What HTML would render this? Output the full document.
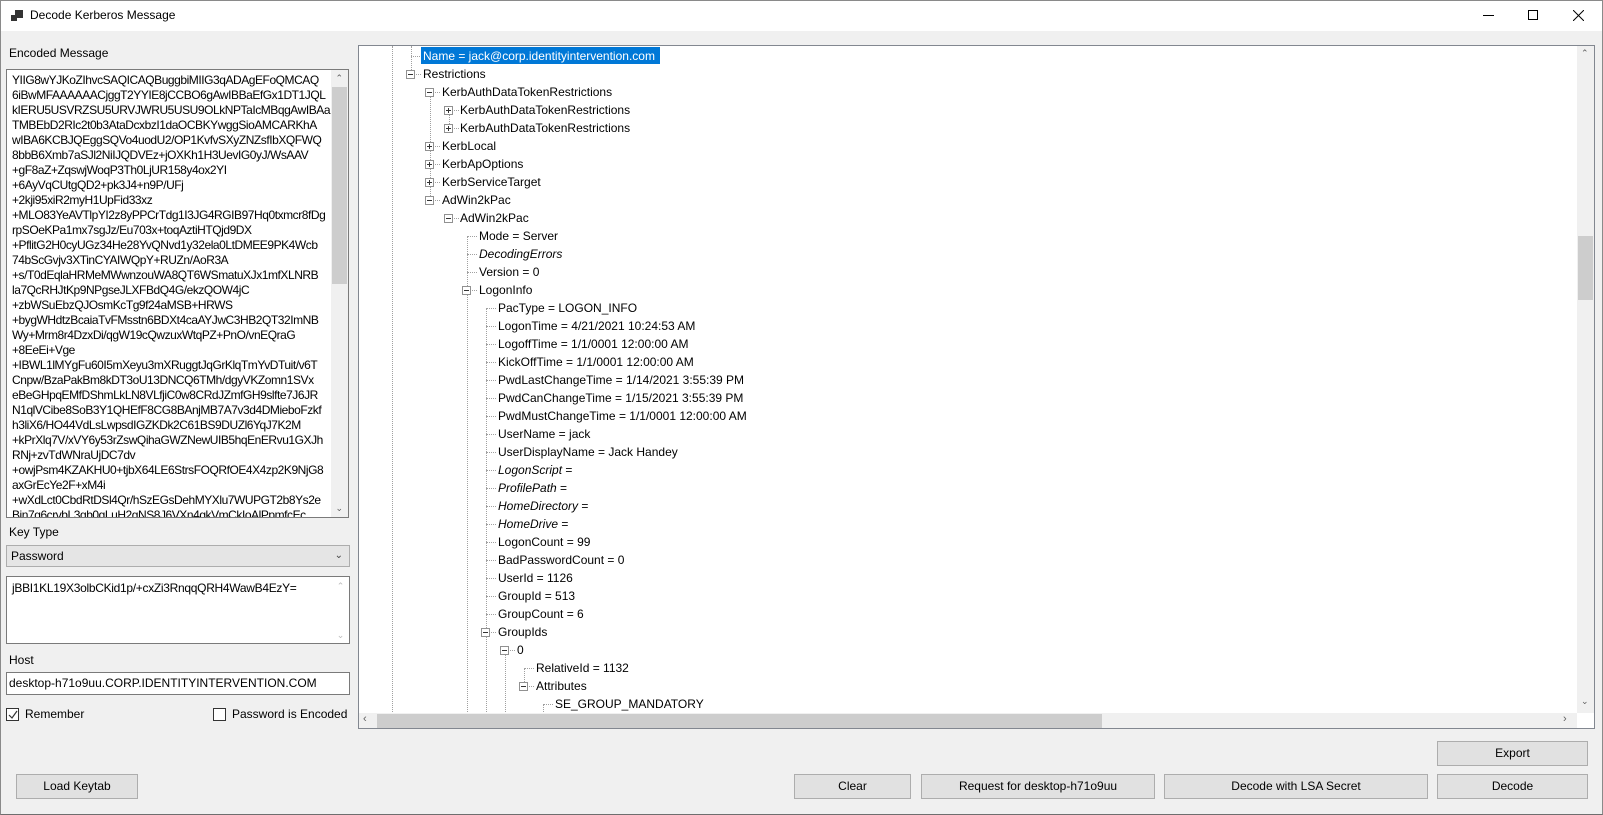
<!DOCTYPE html>
<html><head><meta charset="utf-8"><style>
*{box-sizing:border-box;margin:0;padding:0}
body{width:1603px;height:815px;overflow:hidden;background:#f0f0f0;font-family:"Liberation Sans",sans-serif;font-size:12px;color:#000;position:relative}
.abs{position:absolute}
.win{position:absolute;left:0;top:0;width:1603px;height:815px;border:1px solid #8a8a8a;border-bottom-color:#6e6e6e}
.title{position:absolute;left:1px;top:1px;width:1601px;height:30px;background:#fff}
.btn{position:absolute;background:#e1e1e1;border:1px solid #adadad;text-align:center;line-height:23px;font-size:12px}
.lines div{white-space:nowrap;height:15px;line-height:15px;letter-spacing:-0.45px}
.row{position:absolute;white-space:nowrap;height:16px;line-height:16px}
.vl{position:absolute;width:0;border-left:1px dotted #a0a0a0}
.hl{position:absolute;height:0;border-top:1px dotted #a0a0a0}
.ex{position:absolute;width:9px;height:9px;border:1px solid #919191;background:#fff}
.ex:before{content:"";position:absolute;left:1px;top:3px;width:5px;height:1px;background:#333}
.ex.p:after{content:"";position:absolute;left:3px;top:1px;width:1px;height:5px;background:#333}
i{font-style:italic}
</style></head><body>
<div class="win"></div>
<div class="title"></div>
<svg class="abs" style="left:11px;top:10px" width="12" height="12"><rect x="4" y="0" width="8" height="8" fill="#333"/><rect x="0" y="5" width="6" height="6" fill="#333"/></svg>
<div class="abs" style="left:30px;top:8px;font-size:12px">Decode Kerberos Message</div>
<div class="abs" style="left:1483px;top:15px;width:11px;height:1px;background:#000"></div>
<div class="abs" style="left:1528px;top:10px;width:10px;height:10px;border:1px solid #000"></div>
<svg class="abs" style="left:1573px;top:10px" width="11" height="11"><path d="M0 0L11 11M11 0L0 11" stroke="#000" stroke-width="1"/></svg>

<div class="abs" style="left:9px;top:46px">Encoded Message</div>
<div class="abs" style="left:6px;top:69px;width:343px;height:449px;background:#fff;border:1px solid #7a7a7a;overflow:hidden">
<div class="lines" style="position:absolute;left:5px;top:3px;width:320px;overflow:hidden">
<div>YIIG8wYJKoZIhvcSAQICAQBuggbiMIIG3qADAgEFoQMCAQ</div>
<div>6iBwMFAAAAAACjggT2YYIE8jCCBO6gAwIBBaEfGx1DT1JQL</div>
<div>kIERU5USVRZSU5URVJWRU5USU9OLkNPTaIcMBqgAwIBAaE</div>
<div>TMBEbD2RIc2t0b3AtaDcxbzI1daOCBKYwggSioAMCARKhA</div>
<div>wIBA6KCBJQEggSQVo4uodU2/OP1KvfvSXyZNZsfIbXQFWQ</div>
<div>8bbB6Xmb7aSJl2NiIJQDVEz+jOXKh1H3UevIG0yJ/WsAAV</div>
<div>+gF8aZ+ZqswjWoqP3Th0LjUR158y4ox2YI</div>
<div>+6AyVqCUtgQD2+pk3J4+n9P/UFj</div>
<div>+2kji95xiR2myH1UpFid33xz</div>
<div>+MLO83YeAVTlpYI2z8yPPCrTdg1I3JG4RGIB97Hq0txmcr8fDg</div>
<div>rpSOeKPa1mx7sgJz/Eu703x+toqAztiHTQjd9DX</div>
<div>+PflitG2H0cyUGz34He28YvQNvd1y32ela0LtDMEE9PK4Wcb</div>
<div>74bScGvjv3XTinCYAIWQpY+RUZn/AoR3A</div>
<div>+s/T0dEqlaHRMeMWwnzouWA8QT6WSmatuXJx1mfXLNRB</div>
<div>la7QcRHJtKp9NPgseJLXFBdQ4G/ekzQOW4jC</div>
<div>+zbWSuEbzQJOsmKcTg9f24aMSB+HRWS</div>
<div>+bygWHdtzBcaiaTvFMsstn6BDXt4caAYJwC3HB2QT32ImNB</div>
<div>Wy+Mrm8r4DzxDi/qgW19cQwzuxWtqPZ+PnO/vnEQraG</div>
<div>+8EeEi+Vge</div>
<div>+IBWL1lMYgFu60I5mXeyu3mXRuggtJqGrKlqTmYvDTuit/v6T</div>
<div>Cnpw/BzaPakBm8kDT3oU13DNCQ6TMh/dgyVKZomn1SVx</div>
<div>eBeGHpqEMfDShmLkLN8VLfjiC0w8CRdJZmfGH9slfte7J6JR</div>
<div>N1qlVCibe8SoB3Y1QHEfF8CG8BAnjMB7A7v3d4DMieboFzkf</div>
<div>h3liX6/HO44VdLsLwpsdIGZKDk2C61BS9DUZl6YqJ7K2M</div>
<div>+kPrXlq7V/xVY6y53rZswQihaGWZNewUIB5hqEnERvu1GXJh</div>
<div>RNj+zvTdWNraUjDC7dv</div>
<div>+owjPsm4KZAKHU0+tjbX64LE6StrsFOQRfOE4X4zp2K9NjG8</div>
<div>axGrEcYe2F+xM4i</div>
<div>+wXdLct0CbdRtDSl4Qr/hSzEGsDehMYXlu7WUPGT2b8Ys2e</div>
<div>Bin7g6crvbL3gb0gLuH2gNS8J6VXn4gkVmCkIoAlPpmfcEc</div>
</div>
<div class="abs" style="right:0;top:0;width:17px;height:447px;background:#f0f0f0"></div>
<div class="abs" style="right:1px;top:17px;width:15px;height:197px;background:#cdcdcd"></div>
<div class="abs" style="right:5px;top:3px;font-size:9px;color:#606060">&#8963;</div>
<div class="abs" style="right:5px;bottom:3px;font-size:9px;color:#606060">&#8964;</div>
</div>

<div class="abs" style="left:9px;top:525px">Key Type</div>
<div class="abs" style="left:6px;top:545px;width:344px;height:22px;background:#e5e5e5;border:1px solid #adadad;padding-left:4px;line-height:20px">Password<span style="position:absolute;right:6px;top:0;font-size:10px;color:#444">&#8964;</span></div>
<div class="abs" style="left:6px;top:576px;width:344px;height:68px;background:#fff;border:1px solid #7a7a7a;padding:4px 0 0 5px;letter-spacing:-0.3px">jBBI1KL19X3olbCKid1p/+cxZi3RnqqQRH4WawB4EzY=<span style="position:absolute;right:5px;top:4px;font-size:9px;color:#bbb">&#8963;</span><span style="position:absolute;right:5px;bottom:2px;font-size:9px;color:#bbb">&#8964;</span></div>
<div class="abs" style="left:9px;top:653px">Host</div>
<div class="abs" style="left:6px;top:672px;width:344px;height:23px;background:#fff;border:1px solid #7a7a7a;padding-left:2px;line-height:21px">desktop-h71o9uu.CORP.IDENTITYINTERVENTION.COM</div>
<div class="abs" style="left:6px;top:708px;width:13px;height:13px;border:1px solid #333;background:#fff"></div>
<svg class="abs" style="left:8px;top:710px" width="10" height="10"><path d="M1 5L4 8L9 1" stroke="#333" fill="none" stroke-width="1.2"/></svg>
<div class="abs" style="left:25px;top:707px">Remember</div>
<div class="abs" style="left:213px;top:708px;width:13px;height:13px;border:1px solid #333;background:#fff"></div>
<div class="abs" style="left:232px;top:707px">Password is Encoded</div>

<div class="abs" style="left:358px;top:45px;width:1237px;height:684px;background:#fff;border:1px solid #828790;overflow:hidden">
<div class="abs" style="left:1218px;top:0;width:17px;height:667px;background:#f0f0f0"></div>
<div class="abs" style="left:1219px;top:190px;width:15px;height:64px;background:#cdcdcd"></div>
<div class="abs" style="left:1222px;top:2px;font-size:9px;color:#606060">&#8963;</div>
<div class="abs" style="left:1222px;top:650px;font-size:9px;color:#606060">&#8964;</div>
<div class="abs" style="left:0;top:667px;width:1218px;height:16px;background:#f0f0f0"></div>
<div class="abs" style="left:18px;top:668px;width:725px;height:14px;background:#cdcdcd"></div>
<div class="abs" style="left:4px;top:667px;font-size:11px;color:#606060">&#8249;</div>
<div class="abs" style="left:1204px;top:667px;font-size:11px;color:#606060">&#8250;</div>
</div>
<div class="abs" style="left:359px;top:46px;width:1218px;height:666px;overflow:hidden">
<div style="position:absolute;left:-359px;top:-46px;width:1600px;height:800px">
<div class="vl" style="left:392px;top:46px;height:666px"></div>
<div class="vl" style="left:411px;top:46px;height:26px"></div>
<div class="vl" style="left:430px;top:92px;height:108px"></div>
<div class="vl" style="left:449px;top:110px;height:18px"></div>
<div class="vl" style="left:467px;top:236px;height:476px"></div>
<div class="vl" style="left:486px;top:308px;height:404px"></div>
<div class="vl" style="left:505px;top:650px;height:62px"></div>
<div class="vl" style="left:524px;top:668px;height:22px"></div>
<div class="vl" style="left:543px;top:704px;height:8px"></div>
<div class="abs" style="left:421px;top:47px;width:239px;height:17px;background:#0078d7"></div>
<div class="row" style="left:423px;top:48px;color:#fff">Name = jack@corp.identityintervention.com</div>
<div class="hl" style="left:411px;top:56px;width:9px"></div>
<div class="ex" style="left:406px;top:70px"></div><div class="hl" style="left:416px;top:74px;width:5px"></div><div class="row" style="left:423px;top:66px">Restrictions</div>
<div class="ex" style="left:425px;top:88px"></div><div class="hl" style="left:435px;top:92px;width:5px"></div><div class="row" style="left:442px;top:84px">KerbAuthDataTokenRestrictions</div>
<div class="ex p" style="left:444px;top:106px"></div><div class="hl" style="left:454px;top:110px;width:5px"></div><div class="row" style="left:460px;top:102px">KerbAuthDataTokenRestrictions</div>
<div class="ex p" style="left:444px;top:124px"></div><div class="hl" style="left:454px;top:128px;width:5px"></div><div class="row" style="left:460px;top:120px">KerbAuthDataTokenRestrictions</div>
<div class="ex p" style="left:425px;top:142px"></div><div class="hl" style="left:435px;top:146px;width:5px"></div><div class="row" style="left:442px;top:138px">KerbLocal</div>
<div class="ex p" style="left:425px;top:160px"></div><div class="hl" style="left:435px;top:164px;width:5px"></div><div class="row" style="left:442px;top:156px">KerbApOptions</div>
<div class="ex p" style="left:425px;top:178px"></div><div class="hl" style="left:435px;top:182px;width:5px"></div><div class="row" style="left:442px;top:174px">KerbServiceTarget</div>
<div class="ex" style="left:425px;top:196px"></div><div class="hl" style="left:435px;top:200px;width:5px"></div><div class="row" style="left:442px;top:192px">AdWin2kPac</div>
<div class="ex" style="left:444px;top:214px"></div><div class="hl" style="left:454px;top:218px;width:5px"></div><div class="row" style="left:460px;top:210px">AdWin2kPac</div>
<div class="hl" style="left:467px;top:236px;width:10px"></div><div class="row" style="left:479px;top:228px">Mode = Server</div>
<div class="hl" style="left:467px;top:254px;width:10px"></div><div class="row" style="left:479px;top:246px"><i>DecodingErrors</i></div>
<div class="hl" style="left:467px;top:272px;width:10px"></div><div class="row" style="left:479px;top:264px">Version = 0</div>
<div class="ex" style="left:462px;top:286px"></div><div class="hl" style="left:472px;top:290px;width:5px"></div><div class="row" style="left:479px;top:282px">LogonInfo</div>
<div class="hl" style="left:486px;top:308px;width:10px"></div><div class="row" style="left:498px;top:300px">PacType = LOGON_INFO</div>
<div class="hl" style="left:486px;top:326px;width:10px"></div><div class="row" style="left:498px;top:318px">LogonTime = 4/21/2021 10:24:53 AM</div>
<div class="hl" style="left:486px;top:344px;width:10px"></div><div class="row" style="left:498px;top:336px">LogoffTime = 1/1/0001 12:00:00 AM</div>
<div class="hl" style="left:486px;top:362px;width:10px"></div><div class="row" style="left:498px;top:354px">KickOffTime = 1/1/0001 12:00:00 AM</div>
<div class="hl" style="left:486px;top:380px;width:10px"></div><div class="row" style="left:498px;top:372px">PwdLastChangeTime = 1/14/2021 3:55:39 PM</div>
<div class="hl" style="left:486px;top:398px;width:10px"></div><div class="row" style="left:498px;top:390px">PwdCanChangeTime = 1/15/2021 3:55:39 PM</div>
<div class="hl" style="left:486px;top:416px;width:10px"></div><div class="row" style="left:498px;top:408px">PwdMustChangeTime = 1/1/0001 12:00:00 AM</div>
<div class="hl" style="left:486px;top:434px;width:10px"></div><div class="row" style="left:498px;top:426px">UserName = jack</div>
<div class="hl" style="left:486px;top:452px;width:10px"></div><div class="row" style="left:498px;top:444px">UserDisplayName = Jack Handey</div>
<div class="hl" style="left:486px;top:470px;width:10px"></div><div class="row" style="left:498px;top:462px"><i>LogonScript</i> =</div>
<div class="hl" style="left:486px;top:488px;width:10px"></div><div class="row" style="left:498px;top:480px"><i>ProfilePath</i> =</div>
<div class="hl" style="left:486px;top:506px;width:10px"></div><div class="row" style="left:498px;top:498px"><i>HomeDirectory</i> =</div>
<div class="hl" style="left:486px;top:524px;width:10px"></div><div class="row" style="left:498px;top:516px"><i>HomeDrive</i> =</div>
<div class="hl" style="left:486px;top:542px;width:10px"></div><div class="row" style="left:498px;top:534px">LogonCount = 99</div>
<div class="hl" style="left:486px;top:560px;width:10px"></div><div class="row" style="left:498px;top:552px">BadPasswordCount = 0</div>
<div class="hl" style="left:486px;top:578px;width:10px"></div><div class="row" style="left:498px;top:570px">UserId = 1126</div>
<div class="hl" style="left:486px;top:596px;width:10px"></div><div class="row" style="left:498px;top:588px">GroupId = 513</div>
<div class="hl" style="left:486px;top:614px;width:10px"></div><div class="row" style="left:498px;top:606px">GroupCount = 6</div>
<div class="ex" style="left:481px;top:628px"></div><div class="hl" style="left:491px;top:632px;width:5px"></div><div class="row" style="left:498px;top:624px">GroupIds</div>
<div class="ex" style="left:500px;top:646px"></div><div class="hl" style="left:510px;top:650px;width:5px"></div><div class="row" style="left:517px;top:642px">0</div>
<div class="hl" style="left:524px;top:668px;width:10px"></div><div class="row" style="left:536px;top:660px">RelativeId = 1132</div>
<div class="ex" style="left:519px;top:682px"></div><div class="hl" style="left:529px;top:686px;width:5px"></div><div class="row" style="left:536px;top:678px">Attributes</div>
<div class="hl" style="left:543px;top:704px;width:10px"></div><div class="row" style="left:555px;top:696px">SE_GROUP_MANDATORY</div>
</div></div>

<div class="btn" style="left:1437px;top:741px;width:151px;height:25px">Export</div>
<div class="btn" style="left:16px;top:774px;width:122px;height:25px">Load Keytab</div>
<div class="btn" style="left:794px;top:774px;width:117px;height:25px">Clear</div>
<div class="btn" style="left:921px;top:774px;width:234px;height:25px">Request for desktop-h71o9uu</div>
<div class="btn" style="left:1164px;top:774px;width:264px;height:25px">Decode with LSA Secret</div>
<div class="btn" style="left:1437px;top:774px;width:151px;height:25px">Decode</div>
</body></html>
